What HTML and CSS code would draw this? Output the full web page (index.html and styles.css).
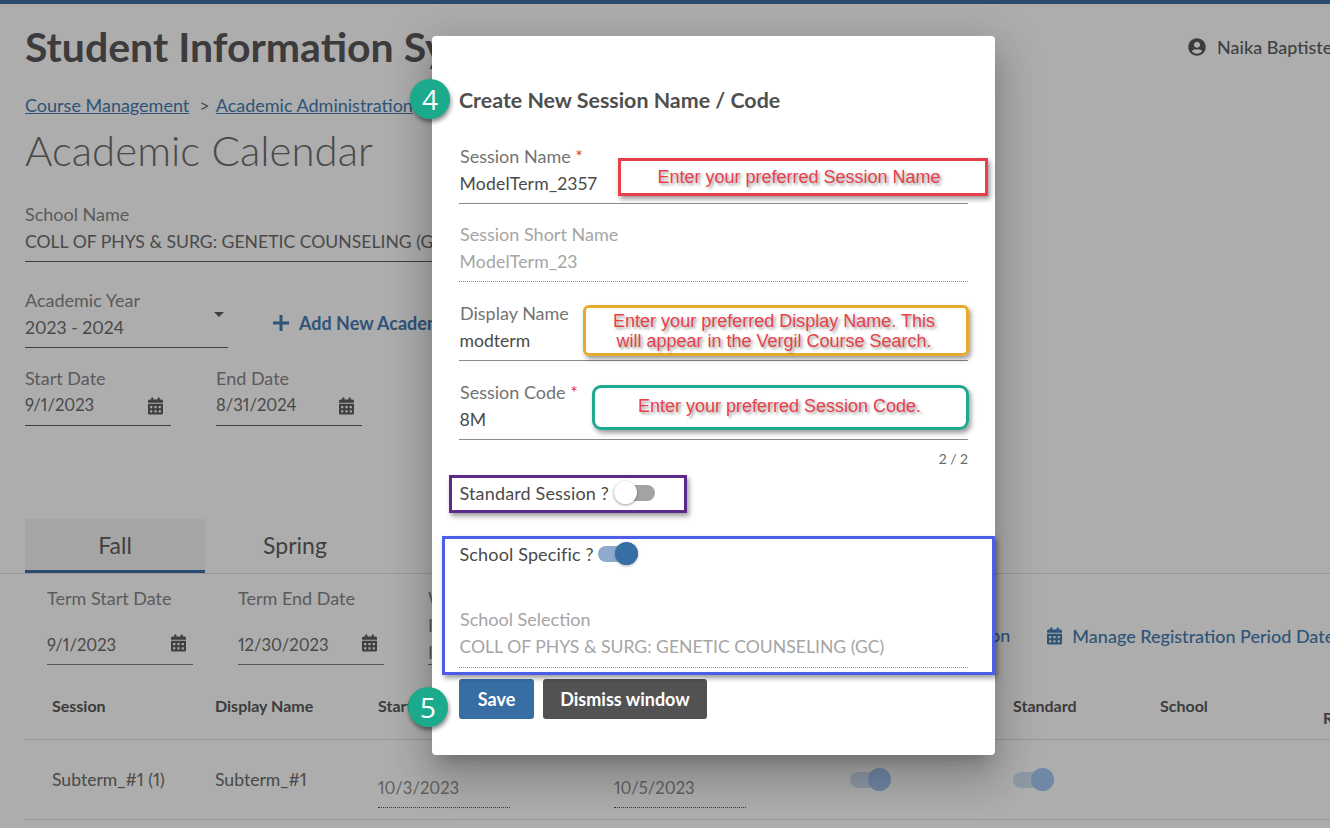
FILE: index.html
```html
<!DOCTYPE html>
<html lang="en">
<head>
<meta charset="utf-8">
<title>Academic Calendar</title>
<link rel="stylesheet" href="styles.css">
</head>
<body>
<svg class="defs" aria-hidden="true">
  <symbol id="cal" viewBox="0 0 448 512"><path d="M0 464c0 26.5 21.5 48 48 48h352c26.5 0 48-21.5 48-48V192H0v272zm320-196c0-6.6 5.4-12 12-12h40c6.6 0 12 5.4 12 12v40c0 6.6-5.4 12-12 12h-40c-6.6 0-12-5.4-12-12v-40zm0 128c0-6.6 5.4-12 12-12h40c6.6 0 12 5.4 12 12v40c0 6.6-5.4 12-12 12h-40c-6.6 0-12-5.4-12-12v-40zM192 268c0-6.6 5.4-12 12-12h40c6.6 0 12 5.4 12 12v40c0 6.6-5.4 12-12 12h-40c-6.6 0-12-5.4-12-12v-40zm0 128c0-6.6 5.4-12 12-12h40c6.6 0 12 5.4 12 12v40c0 6.6-5.4 12-12 12h-40c-6.6 0-12-5.4-12-12v-40zM64 268c0-6.6 5.4-12 12-12h40c6.6 0 12 5.4 12 12v40c0 6.6-5.4 12-12 12H76c-6.6 0-12-5.4-12-12v-40zm0 128c0-6.6 5.4-12 12-12h40c6.6 0 12 5.4 12 12v40c0 6.6-5.4 12-12 12H76c-6.6 0-12-5.4-12-12v-40zM400 64h-48V16c0-8.8-7.2-16-16-16h-32c-8.8 0-16 7.2-16 16v48H160V16c0-8.8-7.2-16-16-16h-32c-8.8 0-16 7.2-16 16v48H48C21.5 64 0 85.5 0 112v48h448v-48c0-26.5-21.5-48-48-48z"/></symbol>
</svg>

<div class="page">
  <div class="topbar"></div>
  <header class="header">
    <div class="title-slot"><h1 class="app-title">Student Information System</h1></div>
    <div class="user">
      <svg class="user-icon" viewBox="0 0 496 512"><path d="M248 8C111 8 0 119 0 256s111 248 248 248 248-111 248-248S385 8 248 8zm0 96c48.6 0 88 39.4 88 88s-39.4 88-88 88-88-39.4-88-88 39.4-88 88-88zm0 344c-58.7 0-111.3-26.6-146.5-68.2 18.8-35.4 55.6-59.8 98.5-59.8 2.4 0 4.8.4 7.1 1.1 13 4.2 26.6 6.9 40.9 6.9 14.3 0 28-2.7 40.9-6.9 2.3-.7 4.7-1.1 7.1-1.1 42.9 0 79.7 24.4 98.5 59.8C359.3 421.4 306.7 448 248 448z"/></svg>
      <span class="user-name">Naika Baptiste</span>
    </div>
  </header>

  <nav class="crumbs"><a class="crumb">Course Management</a><span class="crumb-sep">&gt;</span><a class="crumb">Academic Administration</a></nav>
  <h2 class="page-title">Academic Calendar</h2>

  <div class="bg-field school-field">
    <div class="bg-label">School Name</div>
    <div class="bg-value">COLL OF PHYS &amp; SURG: GENETIC COUNSELING (GC)</div>
  </div>

  <div class="year-row">
    <div class="bg-field year-field">
      <div class="bg-label">Academic Year</div>
      <div class="bg-value">2023 - 2024</div>
      <span class="caret"></span>
    </div>
    <a class="action add-year">
      <svg class="plus" viewBox="0 0 16 16"><path d="M6.5 0h3v6.500H16v3H9.500V16h-3V9.500H0v-3h6.500z"/></svg>
      <span>Add New Academic Year</span>
    </a>
  </div>

  <div class="date-row">
    <div class="bg-field date-field">
      <div class="bg-label">Start Date</div>
      <div class="bg-value">9/1/2023</div>
      <svg class="cal-icon"><use href="#cal"/></svg>
    </div>
    <div class="bg-field date-field">
      <div class="bg-label">End Date</div>
      <div class="bg-value">8/31/2024</div>
      <svg class="cal-icon"><use href="#cal"/></svg>
    </div>
  </div>

  <div class="tabs">
    <div class="tab tab-active">Fall</div>
    <div class="tab">Spring</div>
  </div>

  <div class="term-row">
    <div class="term-field">
      <div class="bg-label term-label">Term Start Date</div>
      <div class="bg-value">9/1/2023</div>
      <svg class="cal-icon"><use href="#cal"/></svg>
    </div>
    <div class="term-field">
      <div class="bg-label term-label">Term End Date</div>
      <div class="bg-value">12/30/2023</div>
      <svg class="cal-icon"><use href="#cal"/></svg>
    </div>
    <div class="term-field term-notes">
      <div class="bg-label">W<br>I<br>I</div>
    </div>
    <a class="action term-action-a">on</a>
    <a class="action term-action-b">
      <svg class="cal-icon-link"><use href="#cal"/></svg>
      <span>Manage Registration Period Dates</span>
    </a>
  </div>

  <div class="grid grid-head">
    <div class="th">Session</div>
    <div class="th">Display Name</div>
    <div class="th">Start Date</div>
    <div class="th"></div>
    <div class="th"></div>
    <div class="th">Standard</div>
    <div class="th">School</div>
    <div class="th th-low">R</div>
  </div>
  <div class="grid grid-row">
    <div class="td">Subterm_#1 (1)</div>
    <div class="td">Subterm_#1</div>
    <div class="td-date">10/3/2023</div>
    <div class="td-date">10/5/2023</div>
    <div class="td-toggle"><span class="toggle toggle-dim"></span></div>
    <div class="td-toggle"><span class="toggle toggle-dim"></span></div>
    <div></div>
    <div></div>
  </div>
</div>

<div class="scrim"></div>

<section class="modal">
  <h3 class="modal-title">Create New Session Name / Code</h3>

  <div class="field field-first">
    <div class="field-label">Session Name <span class="req">*</span></div>
    <div class="field-value name-value">ModelTerm_2357</div>
  </div>
  <div class="field field-off">
    <div class="field-label">Session Short Name</div>
    <div class="field-value name-value">ModelTerm_23</div>
  </div>
  <div class="field">
    <div class="field-label">Display Name</div>
    <div class="field-value">modterm</div>
  </div>
  <div class="field field-last">
    <div class="field-label">Session Code <span class="req">*</span></div>
    <div class="field-value">8M</div>
  </div>
  <div class="counter">2 / 2</div>

  <div class="switch-row std-row">
    <span class="switch-label">Standard Session ?</span>
    <span class="toggle toggle-off"></span>
  </div>
  <div class="switch-row school-row">
    <span class="switch-label">School Specific ?</span>
    <span class="toggle toggle-on"></span>
  </div>

  <div class="field field-off selection">
    <div class="field-label">School Selection</div>
    <div class="field-value">COLL OF PHYS &amp; SURG: GENETIC COUNSELING (GC)</div>
  </div>

  <div class="buttons">
    <button class="btn btn-save">Save</button>
    <button class="btn btn-dismiss">Dismiss window</button>
  </div>
</section>

<div class="note note-red">Enter your preferred Session Name</div>
<div class="note note-yellow">Enter your preferred Display Name. This<br>will appear in the Vergil Course Search.</div>
<div class="note note-green">Enter your preferred Session Code.</div>
<div class="frame frame-purple"></div>
<div class="frame frame-blue"></div>
<div class="badge badge-4">4</div>
<div class="badge badge-5">5</div>
</body>
</html>
```
FILE: styles.css
```css
* { box-sizing: border-box; }
html, body { margin: 0; padding: 0; }
body {
  width: 1330px;
  height: 828px;
  overflow: hidden;
  position: relative;
  background: #fff;
  font-family: "Lato", "Liberation Sans", sans-serif;
  font-variant-numeric: proportional-nums;
}
.defs { display: none; }
.page { width: 1330px; height: 828px; overflow: hidden; }
.topbar { height: 4px; background: #3f6ea3; }

.header { display: flex; align-items: center; height: 88px; padding: 0 0 3px 25px; }
.title-slot { width: 1163px; flex: none; }
.app-title { margin: 0; width: 407px; overflow: hidden; font-size: 41px; font-weight: 700; color: #5b5858; white-space: nowrap; }
.user { display: flex; align-items: center; gap: 11px; flex: none; white-space: nowrap; }
.user-icon { width: 18px; height: 18px; fill: #5b5858; }
.user-name { font-size: 18px; font-weight: 500; color: #5f5f5f; }

.crumbs { height: 26px; padding-left: 25px; font-size: 18px; line-height: 26px; white-space: nowrap; }
.crumb { color: #457cb1; text-decoration: underline; }
.crumb-sep { margin: 0 6px 0 10px; color: #6d6d6d; }

.page-title { margin: 0; height: 63px; padding: 6px 0 0 25px; font-size: 42px; line-height: 52px; font-weight: 300; color: #6d6d6d; }

.bg-field { position: relative; border-bottom: 1px solid #5d5d5d; }
.bg-label { font-size: 18px; line-height: 27px; color: #878787; white-space: nowrap; }
.bg-value { font-size: 17.6px; line-height: 27px; color: #6d6d6d; white-space: nowrap; }

.school-field { margin: 20px 0 0 25px; width: 407px; height: 61px; overflow: hidden; }

.year-row { display: flex; align-items: center; margin: 25px 0 0 25px; }
.year-field { width: 203px; height: 61px; }
.caret { position: absolute; right: 4px; top: 25px; width: 0; height: 0; border-left: 5.5px solid transparent; border-right: 5.5px solid transparent; border-top: 5px solid #5d5d5d; }
.action { color: #457cb1; font-size: 18px; font-weight: 700; white-space: nowrap; display: flex; align-items: center; }
.add-year { margin-left: 45px; gap: 10px; position: relative; top: 5px; width: 159px; overflow: hidden; }
.plus { width: 16px; height: 16px; fill: #457cb1; flex: none; }

.date-row { display: flex; gap: 45px; margin: 17px 0 0 25px; }
.date-field { width: 146px; height: 61px; }
.date-field .bg-value { font-size: 16.6px; }
.cal-icon { position: absolute; right: 8px; top: 32px; width: 15px; height: 18px; fill: #5d5d5d; }

.tabs { display: flex; margin-top: 93px; height: 55px; border-bottom: 1px solid #e0e0e0; padding-left: 25px; }
.tab { width: 180px; height: 54px; text-align: center; font-size: 23px; line-height: 53px; color: #5f5f5f; }
.tab-active { background: #f3f3f3; border-bottom: 3px solid #3f6ea3; }

.term-row { display: flex; margin-left: 47px; padding-top: 11px; height: 91px; }
.term-field { position: relative; width: 146px; height: 80px; margin-right: 45px; border-bottom: 1px solid #7d7d7d; flex: none; }
.term-field .term-label { height: 33px; }
.term-field .bg-value { margin-top: 14px; font-size: 16.6px; }
.term-field .cal-icon { top: 49px; right: 7px; }
.term-notes { width: 100px; margin: 0 0 0 -1px; }
.term-action-a { margin: 37px 0 0 462px; height: 27px; line-height: 27px; font-weight: 500; }
.term-action-b { margin: 37px 0 0 37px; height: 27px; gap: 10px; font-weight: 500; }
.cal-icon-link { width: 15px; height: 18px; fill: #457cb1; flex: none; }

.grid { display: grid; grid-template-columns: 163px 163px 236px 236px 163px 147px 163px 100px; margin-left: 25px; padding-left: 27px; border-bottom: 1px solid #e0e0e0; }
.grid-head { height: 75px; align-items: start; padding-top: 29px; }
.th { font-size: 16px; font-weight: 700; line-height: 24px; color: #5b5858; white-space: nowrap; }
.th-low { margin-top: 12px; }
.grid-row { height: 80px; align-items: center; }
.td { font-size: 17.6px; color: #6d6d6d; white-space: nowrap; }
.td-date { align-self: start; width: 132px; height: 32px; margin-top: 36px; font-size: 16.6px; line-height: 24px; color: #8f8f8f; border-bottom: 1px dotted #555; }
.td-toggle { display: flex; }

.toggle { position: relative; display: block; width: 41px; height: 16px; border-radius: 8px; flex: none; }
.toggle::after { content: ""; position: absolute; top: -4px; width: 23px; height: 23px; border-radius: 50%; }
.toggle-dim { background: #d2e2f4; }
.toggle-dim::after { right: 0; background: #a5c8f3; }

.scrim { position: absolute; inset: 0; background: rgba(0,0,0,.32); }

.modal {
  position: absolute; left: 432px; top: 36px; width: 563px; height: 719px;
  padding: 0 27px;
  background: #fff; border-radius: 4px;
  box-shadow: 0 11px 15px -7px rgba(0,0,0,.2), 0 24px 38px 3px rgba(0,0,0,.14), 0 9px 46px 8px rgba(0,0,0,.12);
}
.modal-title { margin: 0; height: 107px; padding: 50px 0 0 0; font-size: 21.4px; line-height: 28px; font-weight: 700; color: #4f4f4f; }
.field { height: 61px; margin-bottom: 18px; border-bottom: 1px solid #8b8b8b; }
.field-first { margin-bottom: 17px; }
.field-label { padding-left: 1px; font-size: 18px; line-height: 27px; color: #737373; }
.field-value { padding-left: .5px; font-size: 17.6px; line-height: 27px; color: #4a4a4a; white-space: nowrap; }
.name-value { letter-spacing: .2px; }
.req { color: #e03a3a; }
.field-off { border-bottom: 1px dotted #8b8b8b; }
.field-off .field-label, .field-off .field-value { color: #a5a5a5; }
.field-last { margin-bottom: 8px; }
.counter { height: 22px; text-align: right; font-size: 14px; line-height: 22px; color: #6a6a6a; }
.switch-row { display: flex; align-items: center; height: 24px; }
.switch-label { padding-left: .5px; font-size: 18px; letter-spacing: .15px; color: #4a4a4a; white-space: nowrap; }
.std-row { margin-top: 11px; }
.std-row .toggle { position: absolute; left: 182px; }
.school-row { margin-top: 37px; }
.school-row .toggle { position: absolute; left: 166px; width: 40px; }
.toggle-off { background: #a3a3a3; }
.toggle-off::after { left: 0; background: #fff; box-shadow: 0 1px 3px rgba(0,0,0,.4); }
.toggle-on { background: #8eabcf; }
.toggle-on::after { right: 0; background: #376ea3; box-shadow: 0 1px 3px rgba(0,0,0,.3); }
.selection { margin-top: 40px; margin-bottom: 11px; height: 62px; }
.buttons { display: flex; gap: 9px; }
.btn { height: 40px; border: 0; border-radius: 3px; padding: 0; font-family: inherit; font-size: 18px; font-weight: 700; color: #fff; }
.btn-save { width: 75px; background: #376ea3; }
.btn-dismiss { width: 164px; background: #525252; }

.note {
  position: absolute; display: flex; align-items: center; justify-content: center; text-align: center;
  font-family: "Liberation Sans", Arial, sans-serif; font-size: 18px; line-height: 20px; color: #e8404a;
  text-shadow: 2px 2px 3px rgba(0,0,0,.4);
  box-shadow: 2px 3px 5px rgba(0,0,0,.4);
}
.note-red { left: 618px; top: 158px; width: 370px; height: 38px; border: 3px solid #e8404a; padding: 0 8px 1px 0; }
.note-yellow { left: 583px; top: 305px; width: 386px; height: 51px; border: 3px solid #e8a92c; border-radius: 6px; padding-right: 4px; }
.note-green { left: 592px; top: 385px; width: 377px; height: 45px; border: 3px solid #1fa98f; border-radius: 9px; padding: 0 2px 3px 0; }
.frame { position: absolute; box-shadow: 2px 3px 5px rgba(0,0,0,.4); }
.frame-purple { left: 449px; top: 475px; width: 238px; height: 38px; border: 3px solid #5b2a8c; }
.frame-blue { left: 442px; top: 536px; width: 553px; height: 139px; border: 3px solid #4a5ee8; }
.badge {
  position: absolute; width: 40px; height: 40px; border-radius: 50%;
  background: #1bab8c; color: #fff; font-family: "Open Sans", sans-serif; font-size: 28px; line-height: 40px; text-align: center;
  box-shadow: 1px 3px 4px rgba(0,0,0,.45);
}
.badge-4 { left: 410px; top: 79px; }
.badge-5 { left: 408px; top: 687px; }
```
